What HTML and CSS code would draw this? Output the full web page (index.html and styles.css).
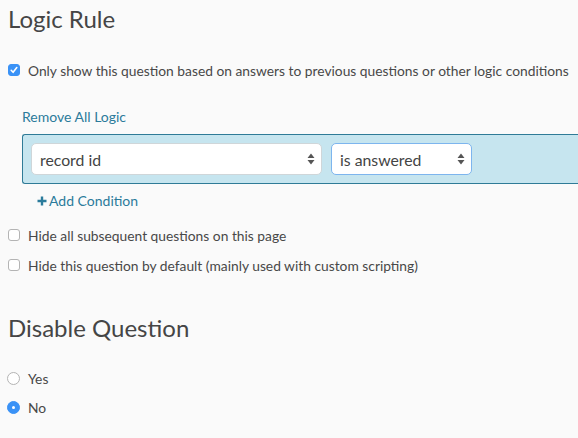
FILE: index.html
```html
<!DOCTYPE html>
<html>
<head>
<meta charset="utf-8">
<link rel="stylesheet" href="styles.css">
</head>
<body>
<h2 class="title">Logic Rule</h2>
<div class="check-row first">
  <span class="box checked"><svg width="12" height="12" viewBox="0 0 12 12"><path d="M3.2 6.3 L5.1 8.3 L8.8 3.6" fill="none" stroke="#fff" stroke-width="1.6" stroke-linecap="round" stroke-linejoin="round"/></svg></span>
  <span class="label">Only show this question based on answers to previous questions or other logic conditions</span>
</div>
<div class="logic">
  <a class="link remove">Remove All Logic</a>
  <div class="condition">
    <div class="select wide"><span>record id</span><svg class="arrows" width="8" height="12" viewBox="0 0 8 12"><path d="M4 0.5 L7.5 5 L0.5 5 Z M4 11.5 L7.5 7 L0.5 7 Z" fill="#555"/></svg></div>
    <div class="select narrow focus"><span>is answered</span><svg class="arrows" width="8" height="12" viewBox="0 0 8 12"><path d="M4 0.5 L7.5 5 L0.5 5 Z M4 11.5 L7.5 7 L0.5 7 Z" fill="#555"/></svg></div>
  </div>
  <a class="link add"><svg width="10" height="10" viewBox="0 0 10 10"><path d="M5 0.5 V9.5 M0.5 5 H9.5" stroke="#2b7b9b" stroke-width="2.4"/></svg>Add Condition</a>
</div>
<div class="check-row opt">
  <span class="box"></span>
  <span class="label">Hide all subsequent questions on this page</span>
</div>
<div class="check-row opt">
  <span class="box"></span>
  <span class="label">Hide this question by default (mainly used with custom scripting)</span>
</div>
<h2 class="title second">Disable Question</h2>
<div class="radio-row">
  <span class="radio"></span><span class="label">Yes</span>
</div>
<div class="radio-row">
  <span class="radio on"></span><span class="label">No</span>
</div>
</body>
</html>
```
FILE: styles.css
```css
html { overflow: hidden; }
body {
  margin: 0;
  padding: 0 0 0 8px;
  background: #fafafa;
  font-family: Lato, "Open Sans", sans-serif;
  color: #484848;
  height: 438px;
}
.title {
  margin: 4px 0 0 0;
  font-size: 24px;
  line-height: 29px;
  font-weight: 400;
  color: #454545;
}
.check-row {
  display: flex;
  align-items: center;
  height: 20px;
  font-size: 13.8px;
}
.check-row.first { margin-top: 27px; }
.box {
  width: 12px;
  height: 12px;
  box-sizing: border-box;
  border: 1px solid #b4b4b4;
  border-radius: 3px;
  background: #fff;
  margin-right: 8px;
  display: flex;
}
.box.checked {
  background: #3a92f6;
  border-color: #3a92f6;
}
.box.checked svg { margin: -1px; }
.label { white-space: nowrap; }
.logic {
  padding-left: 14px;
  margin-top: 28px;
  display: flex;
  flex-direction: column;
}
.link {
  color: #2b7b9b;
  font-size: 14px;
  line-height: 18px;
}
.remove { margin-bottom: 8px; }
.condition {
  display: flex;
  gap: 9px;
  height: 50px;
  box-sizing: border-box;
  padding: 8px;
  background: #c6e5ef;
  border: 1px solid #2f7b97;
  border-right: none;
  border-radius: 3px 0 0 3px;
}
.select {
  height: 32px;
  box-sizing: border-box;
  background: #fff;
  border: 1px solid #cfd6d9;
  border-radius: 5px;
  display: flex;
  align-items: center;
  justify-content: space-between;
  padding: 0 6px 0 8px;
  font-size: 15.8px;
  color: #444;
}
.select.wide { width: 291px; }
.select.narrow { width: 141px; }
.select.focus { border-color: #7db5ee; }
.add {
  margin-top: 8px;
  padding-left: 15px;
  display: flex;
  align-items: center;
  gap: 2px;
}
.logic + .check-row.opt { margin-top: 15px; }
.check-row.opt + .check-row.opt { margin-top: 10px; }
.second { margin-top: 38px; }
.radio-row {
  display: flex;
  align-items: center;
  height: 20px;
  font-size: 13.8px;
}
.radio {
  width: 13px;
  height: 13px;
  box-sizing: border-box;
  border: 1px solid #b4b4b4;
  border-radius: 50%;
  background: #fff;
  margin-left: -1px;
  margin-right: 8px;
  position: relative;
}
.radio.on {
  background: #3a92f6;
  border-color: #3a92f6;
}
.radio.on::after {
  content: "";
  position: absolute;
  left: 4px;
  top: 4px;
  width: 3px;
  height: 3px;
  border-radius: 50%;
  background: #fff;
}
.title.second + .radio-row { margin-top: 26px; }
.radio-row + .radio-row { margin-top: 9px; }
```
